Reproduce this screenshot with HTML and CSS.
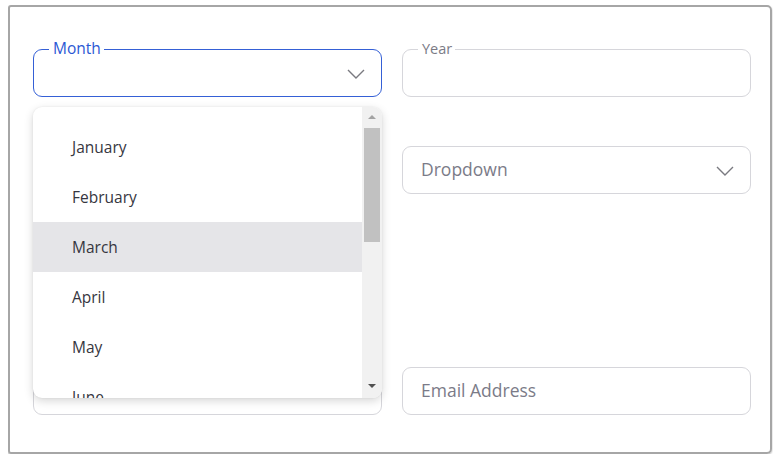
FILE: index.html
```
<!DOCTYPE html>
<html>
<head>
<meta charset="utf-8">
<link rel="stylesheet" href="styles.css">
</head>
<body>
<div class="card">
  <div class="grid">
    <div class="field active">
      <span class="label">Month</span>
      <svg class="chev" width="18" height="10" viewBox="0 0 18 10"><path d="M1 1 L9 9 L17 1" fill="none" stroke="#7a7a80" stroke-width="1.4"/></svg>
      <div class="listbox">
        <ul class="options">
          <li>January</li>
          <li>February</li>
          <li class="hover">March</li>
          <li>April</li>
          <li>May</li>
          <li>June</li>
        </ul>
        <div class="scrollbar">
          <span class="arrow up"></span>
          <span class="thumb"></span>
          <span class="arrow down"></span>
        </div>
      </div>
    </div>
    <div class="field">
      <span class="label muted">Year</span>
    </div>
    <div class="field"></div>
    <div class="field">
      <span class="placeholder">Dropdown</span>
      <svg class="chev" width="18" height="10" viewBox="0 0 18 10"><path d="M1 1 L9 9 L17 1" fill="none" stroke="#7a7a80" stroke-width="1.4"/></svg>
    </div>
    <div class="spacer"></div>
    <div class="spacer"></div>
    <div class="field"></div>
    <div class="field">
      <span class="placeholder">Email Address</span>
    </div>
  </div>
</div>
</body>
</html>
```
FILE: styles.css
```
* { box-sizing: border-box; }
html, body { background: #ffffff; }
body {
  margin: 5px 8px 0 8px;
  font-family: "Open Sans", "Noto Sans", sans-serif;
}
.card {
  width: 764px;
  height: 449px;
  border: 2px solid #a6a6a6;
  border-radius: 3px 5px 5px 3px;
  box-shadow: 0 1px 2px rgba(0,0,0,0.3);
  padding: 42px 0 0 23px;
}
.grid {
  display: grid;
  grid-template-columns: 349px 349px;
  grid-template-rows: 48px 48px 75px 48px;
  column-gap: 20px;
  row-gap: 49px;
}
.field {
  position: relative;
  border: 1px solid #d6d6db;
  border-radius: 9px;
  display: flex;
  align-items: center;
  padding: 0 16px 2px 18px;
}
.field.active {
  border-color: #3560d6;
}
.label {
  position: absolute;
  left: 15px;
  top: -12px;
  padding: 0 3px 0 4px;
  background: #fff;
  font-size: 15.5px;
  line-height: 21px;
  color: #2b57d4;
}
.label.muted { color: #7b7b86; font-size: 14.5px; }
.placeholder {
  font-size: 17.5px;
  color: #7b7b88;
}
.chev {
  margin-left: auto;
  margin-top: 4px;
}
.listbox {
  position: absolute;
  left: -1px;
  right: -1px;
  top: 57px;
  height: 291px;
  background: #fff;
  border-radius: 9px;
  box-shadow: 0 3px 10px rgba(0,0,0,0.16), 0 0 2px rgba(0,0,0,0.08);
  overflow: hidden;
  display: flex;
  z-index: 5;
}
.options {
  list-style: none;
  margin: 0;
  padding: 15px 0 0 0;
  flex: 1;
}
.options li {
  height: 50px;
  display: flex;
  align-items: center;
  padding-left: 39px;
  font-size: 15.5px;
  color: #363640;
}
.options li.hover { background: #e5e5e8; }
.scrollbar {
  width: 20px;
  background: #f1f1f1;
  position: relative;
  display: flex;
  flex-direction: column;
  align-items: center;
}
.arrow {
  width: 0; height: 0;
  border-left: 4px solid transparent;
  border-right: 4px solid transparent;
}
.arrow.up {
  border-bottom: 4px solid #a3a3a3;
  margin-top: 8px;
}
.thumb {
  width: 16px;
  height: 114px;
  background: #c1c1c1;
  margin-top: 9px;
}
.arrow.down {
  border-top: 4px solid #505050;
  margin-top: auto;
  margin-bottom: 10px;
}
```
